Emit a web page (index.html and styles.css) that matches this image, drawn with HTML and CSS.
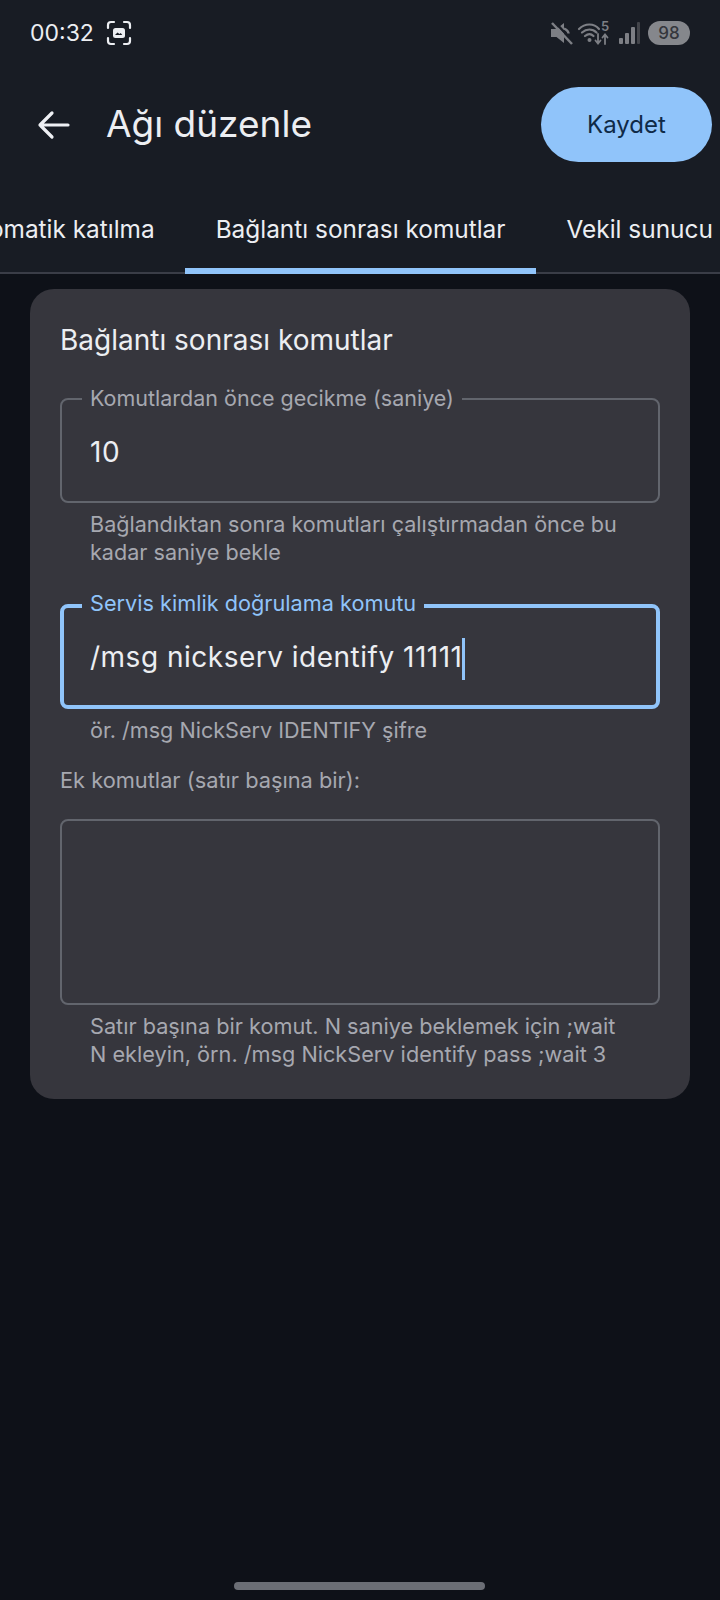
FILE: index.html
```html
<!DOCTYPE html>
<html lang="tr">
<head>
  <meta charset="UTF-8">
  <title>Ağı düzenle</title>
  <link rel="stylesheet" href="styles.css">
</head>
<body>
  <header class="top">
    <div class="status">
      <div class="status-left">
        <span class="time">00:32</span>
        <svg class="shot-icon" width="26" height="26" viewBox="0 0 26 26" fill="none" stroke="#eceef2" stroke-width="2.2" stroke-linecap="round">
          <path d="M2 8V5a3 3 0 0 1 3-3h3M18 2h3a3 3 0 0 1 3 3v3M24 18v3a3 3 0 0 1-3 3h-3M8 24H5a3 3 0 0 1-3-3v-3"/>
          <rect x="7" y="8" width="12" height="10" rx="2.5" fill="#eceef2" stroke="none"/>
          <path d="M9 15l2.500-2.500 2 1.600 1.200-1 1.600 1.900z" fill="#181c24" stroke="none"/>
        </svg>
      </div>
      <div class="status-right">
        <svg class="mute" width="24" height="24" viewBox="0 0 24 24" fill="#7d7f85">
          <path d="M1 8h5.500L14 2v20l-7.500-6H1z"/>
          <path d="M14 7.500c3 1.500 4.500 3 4.500 5" stroke="#7d7f85" stroke-width="2.500" fill="none"/>
          <path d="M4 0l20 22" stroke="#181c24" stroke-width="2.500"/>
          <path d="M2 2l20 21" stroke="#7d7f85" stroke-width="2.500"/>
        </svg>
        <svg class="wifi" width="34" height="26" viewBox="0 0 34 26" fill="none" stroke="#7d7f85" stroke-width="2.200" stroke-linecap="round">
          <path d="M1 9c6-6 15-6 20 0M4 12.500c4.500-4 10.500-4 14.500 0M7 16c3-2.500 6-2.500 8.500 0"/>
          <circle cx="11.500" cy="20" r="2" fill="#7d7f85" stroke="none"/>
          <path d="M20 14v9M17.500 20.500l2.500 3 2.500-3M27 24v-9M24.500 17.500l2.500-3 2.500 3" stroke-width="1.800"/>
          <text x="23" y="11" class="wifi-num">5</text>
        </svg>
        <svg width="22" height="26" viewBox="0 0 22 26" fill="#7d7f85">
          <rect x="1" y="18" width="4" height="6" rx="1"/>
          <rect x="7" y="13" width="4" height="11" rx="1"/>
          <rect x="13" y="7" width="4" height="17" rx="1"/>
          <rect x="19" y="2" width="3" height="22" rx="1" fill="#43454b"/>
        </svg>
        <span class="battery">98</span>
      </div>
    </div>

    <div class="appbar">
      <svg class="back" width="34" height="30" viewBox="0 0 34 30" fill="none" stroke="#eef0f4" stroke-width="3.200" stroke-linecap="round" stroke-linejoin="round">
        <path d="M31 15H3M15 3L3 15l12 12"/>
      </svg>
      <h1 class="title">Ağı düzenle</h1>
      <button class="save" type="button">Kaydet</button>
    </div>

    <nav class="tabs">
      <a class="tab tab-first">Otomatik katılma</a>
      <a class="tab active">Bağlantı sonrası komutlar</a>
      <a class="tab">Vekil sunucu</a>
    </nav>
  </header>

  <main class="content">
    <section class="card">
      <h2 class="card-title">Bağlantı sonrası komutlar</h2>

      <div class="field">
        <span class="field-label">Komutlardan önce gecikme (saniye)</span>
        <span class="field-value">10</span>
      </div>
      <p class="help">Bağlandıktan sonra komutları çalıştırmadan önce bu kadar saniye bekle</p>

      <div class="field focused">
        <span class="field-label">Servis kimlik doğrulama komutu</span>
        <span class="field-value">/msg nickserv identify 11111<i class="caret"></i></span>
      </div>
      <p class="help">ör. /msg NickServ IDENTIFY şifre</p>

      <p class="extra-label">Ek komutlar (satır başına bir):</p>
      <div class="textbox"></div>
      <p class="help">Satır başına bir komut. N saniye beklemek için ;wait N ekleyin, örn. /msg NickServ identify pass ;wait 3</p>
    </section>
  </main>

  <div class="home-bar"></div>
</body>
</html>
```

FILE: styles.css
```css
:root {
  --header: #181c24;
  --page: #0e1118;
  --card: #36363d;
  --primary: #90c4fa;
  --text: #eceef2;
  --muted: #a6a8b0;
  --outline: #62656d;
}

* {
  box-sizing: border-box;
}

body {
  margin: 0;
  width: 720px;
  height: 1600px;
  overflow: hidden;
  display: flex;
  flex-direction: column;
  background-color: var(--page);
  color: var(--text);
  font-family: Inter, "Noto Sans", sans-serif;
}

.top {
  background-color: var(--header);
  height: 274px;
  flex-shrink: 0;
}

.status {
  height: 66px;
  padding: 0 30px;
  display: flex;
  align-items: center;
  justify-content: space-between;
}

.status-left {
  display: flex;
  align-items: center;
  gap: 12px;
}

.time {
  font-size: 23px;
  line-height: 28px;
}

.status-right {
  display: flex;
  align-items: center;
  gap: 6px;
}

.mute {
  margin-right: -2px;
}

.wifi {
  overflow: visible;
}

.wifi-num {
  font-family: Inter, sans-serif;
  font-size: 13px;
  font-weight: 600;
  fill: #7d7f85;
  stroke: none;
}

.battery {
  width: 42px;
  height: 24px;
  margin-left: 2px;
  border-radius: 12px;
  background-color: #85878c;
  color: #34363c;
  font-size: 17px;
  font-weight: 500;
  line-height: 24px;
  text-align: center;
}

.appbar {
  height: 75px;
  margin-top: 21px;
  padding: 0 8px 0 37px;
  display: flex;
  align-items: center;
}

.back {
  flex-shrink: 0;
}

.title {
  margin: 0 0 2px 35px;
  flex-grow: 1;
  font-size: 37px;
  font-weight: 400;
}

.save {
  width: 171px;
  height: 75px;
  border: none;
  border-radius: 38px;
  background-color: var(--primary);
  color: #0f2a47;
  font-family: inherit;
  font-size: 24px;
}

.tabs {
  height: 112px;
  display: flex;
  overflow: hidden;
  box-shadow: inset 0 -2px 0 #3a3d47;
}

.tab {
  flex-shrink: 0;
  padding: 52px 30.500px 0;
  height: 112px;
  font-size: 24.400px;
  line-height: 30px;
  color: var(--text);
}

.tab-first {
  margin-left: -68px;
}

.tab.active {
  border-bottom: 6px solid var(--primary);
}

.content {
  flex-grow: 1;
  padding: 15px 30px 0;
}

.card {
  padding: 33px 30px 31px;
  border-radius: 24px;
  background-color: var(--card);
}

.card-title {
  margin: 0 0 40px;
  font-size: 28px;
  font-weight: 400;
  line-height: 36px;
}

.field {
  position: relative;
  height: 105px;
  padding: 2px 28px 0;
  display: flex;
  align-items: center;
  border: 2px solid var(--outline);
  border-radius: 8px;
}

.field-label {
  position: absolute;
  left: 20px;
  top: -15px;
  padding: 0 8px;
  background-color: var(--card);
  color: var(--muted);
  font-size: 21.500px;
  line-height: 26px;
  white-space: nowrap;
}

.field-value {
  font-size: 28px;
  line-height: 34px;
  letter-spacing: 0.5px;
}

.field.focused {
  border: 4px solid var(--primary);
  padding: 4px 26px 0;
}

.field.focused .field-label {
  left: 18px;
  top: -18px;
  color: var(--primary);
  font-size: 21.700px;
}

.caret {
  display: inline-block;
  width: 3px;
  height: 42px;
  background-color: var(--primary);
  vertical-align: middle;
}

.help {
  margin: 7px 0 38px;
  padding: 0 28px 0 30px;
  color: var(--muted);
  font-size: 21.600px;
  line-height: 28px;
}

.focused + .help {
  margin-bottom: 22px;
}

.extra-label {
  margin: 0 0 25px;
  color: var(--muted);
  font-size: 21.800px;
  line-height: 28px;
}

.textbox {
  height: 186px;
  border: 2px solid var(--outline);
  border-radius: 8px;
}

.textbox + .help {
  margin: 7px 0 0;
  font-size: 21.700px;
}

.home-bar {
  position: absolute;
  left: 234px;
  top: 1582px;
  width: 251px;
  height: 8px;
  border-radius: 4px;
  background-color: #6b6e75;
}
```
